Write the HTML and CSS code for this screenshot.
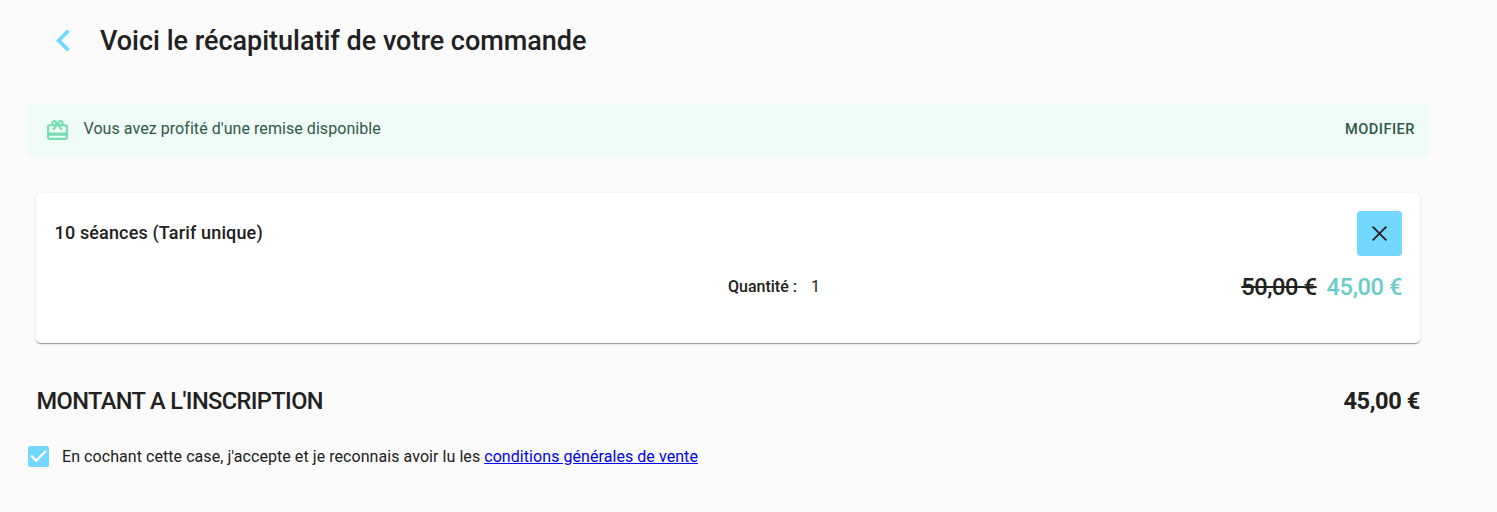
FILE: index.html
```html
<!DOCTYPE html>
<html lang="fr">
<head>
    <meta charset="UTF-8">
    <meta name="viewport" content="width=device-width, initial-scale=1.0">
    <title>Récapitulatif de commande</title>
    <link rel="stylesheet" href="styles.css">
</head>
<body>
    <div class="container">
        <div class="header">
            <button class="back" aria-label="Retour">
                <svg viewBox="0 0 24 24"><path d="M15.41 7.41 14 6l-6 6 6 6 1.41-1.41L10.83 12z"/></svg>
            </button>
            <h1>Voici le récapitulatif de votre commande</h1>
        </div>

        <div class="alert">
            <svg class="alert-icon" viewBox="0 0 24 24"><path d="M20 6h-2.18c.11-.31.18-.65.18-1 0-1.66-1.34-3-3-3-1.05 0-1.96.54-2.5 1.35l-.5.67-.5-.68C10.96 2.54 10.05 2 9 2 7.34 2 6 3.34 6 5c0 .35.07.69.18 1H4c-1.11 0-1.99.89-1.99 2L2 19c0 1.11.89 2 2 2h16c1.11 0 2-.89 2-2V8c0-1.11-.89-2-2-2zm-5-2c.55 0 1 .45 1 1s-.45 1-1 1-1-.45-1-1 .45-1 1-1zM9 4c.55 0 1 .45 1 1s-.45 1-1 1-1-.45-1-1 .45-1 1-1zm11 15H4v-2h16v2zm0-5H4V8h5.08L7 10.83 8.62 12 12 7.4l3.38 4.6L17 10.83 14.92 8H20v6z"/></svg>
            <span class="alert-text">Vous avez profité d'une remise disponible</span>
            <button class="alert-action">MODIFIER</button>
        </div>

        <div class="card">
            <div class="card-top">
                <h2>10 séances (Tarif unique)</h2>
                <button class="remove" aria-label="Supprimer">
                    <svg viewBox="0 0 15 15"><path d="M.6.6l13.8 13.8M14.4.6L.6 14.4"/></svg>
                </button>
            </div>
            <div class="card-bottom">
                <div class="quantity"><span class="quantity-label">Quantité :</span><span>1</span></div>
                <div class="prices">
                    <span class="old-price">50,00 €</span>
                    <span class="new-price">45,00 €</span>
                </div>
            </div>
        </div>

        <div class="total">
            <span class="total-label">MONTANT A L'INSCRIPTION</span>
            <span class="total-price">45,00 €</span>
        </div>

        <div class="terms">
            <svg class="checkbox" viewBox="3 3 18 18"><path d="M19 3H5c-1.11 0-2 .9-2 2v14c0 1.1.89 2 2 2h14c1.11 0 2-.9 2-2V5c0-1.1-.89-2-2-2z"/><path class="tick" d="M10 17l-5-5 1.41-1.41L10 14.17l7.59-7.59L19 8l-9 9z"/></svg>
            <span>En cochant cette case, j'accepte et je reconnais avoir lu les <a href="#">conditions générales de vente</a></span>
        </div>
    </div>
</body>
</html>
```

FILE: styles.css
```css
* {
    box-sizing: border-box;
}

body {
    margin: 0;
    background-color: #fafafa;
    color: #212121;
    font-family: Roboto, sans-serif;
}

.container {
    width: 1402px;
    margin-left: 27px;
    padding-top: 18px;
}

button {
    border: none;
    background: none;
    padding: 0;
    font-family: inherit;
    color: inherit;
    cursor: pointer;
}

svg {
    display: block;
    flex-shrink: 0;
}

h1, h2 {
    margin: 0;
    font-weight: 500;
}

.header {
    display: flex;
    align-items: center;
    height: 45px;
    padding-left: 14px;
}

.back svg {
    width: 45px;
    height: 45px;
    fill: #73d8ff;
}

h1 {
    margin-left: 14px;
    font-size: 27px;
    letter-spacing: -0.01px;
}

.alert {
    display: flex;
    align-items: center;
    height: 54px;
    margin-top: 40px;
    padding: 0 14px 0 18px;
    border-radius: 5px;
    background-color: #eefbf7;
    color: #2e5947;
}

.alert-icon {
    width: 25px;
    height: 25px;
    fill: #74deb2;
}

.alert-text {
    margin-left: 13.5px;
    padding-bottom: 3px;
    font-size: 16px;
    letter-spacing: 0.06px;
}

.alert-action {
    margin-left: auto;
    padding-bottom: 2px;
    font-size: 14.6px;
    font-weight: 500;
    letter-spacing: 0.5px;
}

.card {
    height: 150px;
    margin: 36px 9px 0;
    padding: 18px;
    border-radius: 5px;
    background-color: #fff;
    box-shadow: 0 2px 1px -1px rgba(0, 0, 0, 0.2), 0 1px 1px rgba(0, 0, 0, 0.14), 0 1px 3px rgba(0, 0, 0, 0.12);
}

.card-top {
    display: flex;
    justify-content: space-between;
}

h2 {
    padding-left: 0.5px;
    font-size: 18px;
    line-height: 43px;
    letter-spacing: 0.15px;
}

.remove {
    display: flex;
    align-items: center;
    justify-content: center;
    width: 45px;
    height: 45px;
    border-radius: 4px;
    background-color: #73d8ff;
}

.remove svg {
    width: 15px;
    height: 15px;
    stroke: #212121;
    stroke-width: 1.8;
}

.card-bottom {
    display: grid;
    grid-template-columns: 1fr 1fr;
    align-items: center;
    height: 36px;
    margin-top: 13px;
}

.quantity {
    grid-column: 2;
    grid-row: 1;
    padding-bottom: 2px;
    font-size: 16px;
}

.quantity-label {
    margin-right: 14px;
    font-weight: 500;
}

.prices {
    grid-column: 2;
    grid-row: 1;
    display: flex;
    justify-content: flex-end;
    gap: 10px;
    font-size: 23.6px;
    font-weight: 500;
    letter-spacing: -0.4px;
}

.old-price {
    text-decoration: line-through;
}

.new-price {
    color: #6accc9;
}

.total {
    display: flex;
    justify-content: space-between;
    align-items: center;
    height: 36px;
    margin: 40px 9px 0;
    padding-left: 0.5px;
    font-size: 23.6px;
    font-weight: 500;
}

.total-label {
    letter-spacing: -0.6px;
}

.total-price {
    font-weight: 700;
    letter-spacing: -0.4px;
}

.terms {
    display: flex;
    align-items: center;
    margin-top: 27px;
    padding-left: 1px;
    font-size: 16px;
    letter-spacing: 0.06px;
}

.checkbox {
    width: 21px;
    height: 21px;
    margin-right: 13px;
    fill: #73d8ff;
}

.tick {
    fill: #fff;
}

.terms a {
    color: #0000ee;
}
```
